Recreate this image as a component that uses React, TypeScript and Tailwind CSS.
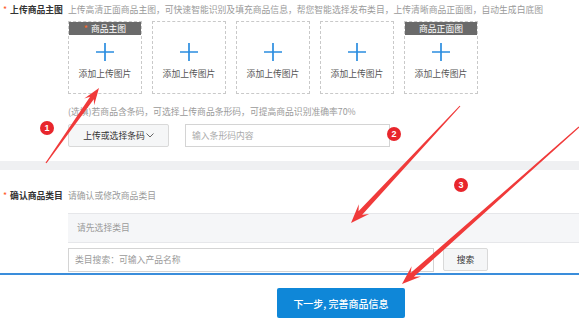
import React from "react";

type P = [number, number];

function arrowPoints(tail: P, tip: P, headLen: number, headW: number, w0: number, w1: number): string {
  const dx = tip[0] - tail[0];
  const dy = tip[1] - tail[1];
  const L = Math.hypot(dx, dy);
  const ux = dx / L, uy = dy / L;
  const nx = -uy, ny = ux;
  const bx = tip[0] - ux * headLen, by = tip[1] - uy * headLen;
  const sx = tip[0] - ux * headLen * 0.72, sy = tip[1] - uy * headLen * 0.72;
  const pts: P[] = [
    [tail[0] + (nx * w0) / 2, tail[1] + (ny * w0) / 2],
    [sx + (nx * w1) / 2, sy + (ny * w1) / 2],
    [bx + (nx * headW) / 2, by + (ny * headW) / 2],
    [tip[0], tip[1]],
    [bx - (nx * headW) / 2, by - (ny * headW) / 2],
    [sx - (nx * w1) / 2, sy - (ny * w1) / 2],
    [tail[0] - (nx * w0) / 2, tail[1] - (ny * w0) / 2],
  ];
  return pts.map((p) => `${p[0].toFixed(1)},${p[1].toFixed(1)}`).join(" ");
}

function Plus() {
  return (
    <svg width="18" height="18" viewBox="0 0 18 18">
      <path d="M9 0V18M0 9H18" stroke="#2b8de0" strokeWidth="1.7" />
    </svg>
  );
}

function UploadBox({ header, star }: { header?: string; star?: boolean }) {
  return (
    <div className="w-[74px] h-[73px] border border-dashed border-[#c9c9c9] flex flex-col items-center">
      {header ? (
        <div className="w-full h-[13px] bg-[#6a6a6a] text-white text-[8.8px] leading-[13px] text-center">
          {star && <span className="text-[#ff6a2a] mr-[3px]">*</span>}
          {header}
        </div>
      ) : null}
      <div className={header ? "mt-[8px]" : "mt-[21px]"}>
        <Plus />
      </div>
      <div className="mt-[7px] text-[8.8px] leading-[12px] text-[#555]">添加上传图片</div>
    </div>
  );
}

function Badge({ n, x, y }: { n: string; x: number; y: number }) {
  return (
    <div
      className="absolute w-[14px] h-[14px] rounded-full bg-[#e8262c] text-white text-[9px] font-bold leading-[14px] text-center font-['Liberation_Sans',sans-serif]"
      style={{ left: x - 7, top: y - 7 }}
    >
      {n}
    </div>
  );
}

export default function App() {
  return (
    <div className="w-[579px] h-[321px] relative overflow-hidden bg-white font-['Noto_Sans_CJK_SC','Noto_Sans',sans-serif]">
      {/* Section 1 */}
      <div className="pt-[4px]">
        <div className="flex h-[12px] items-center text-[8.8px] leading-[12px]">
          <div className="w-[68px] pl-[3px] flex items-center">
            <span className="text-[#ff5a1f]">*</span>
            <span className="ml-[3px] text-[#333] font-bold">上传商品主图</span>
          </div>
          <div className="text-[#9a9a9a] whitespace-nowrap">
            上传高清正面商品主图，可快速智能识别及填充商品信息，帮您智能选择发布类目，上传清晰商品正面图，自动生成白底图
          </div>
        </div>
        <div className="ml-[68px] mt-[5px] flex gap-[10px]">
          <UploadBox header="商品主图" star />
          <UploadBox />
          <UploadBox />
          <UploadBox />
          <UploadBox header="商品正面图" />
        </div>
        <div className="ml-[68px] mt-[12px] text-[8.8px] leading-[12px] text-[#9a9a9a] whitespace-nowrap">
          (选填)若商品含条码，可选择上传商品条形码，可提高商品识别准确率70%
        </div>
        <div className="ml-[68px] mt-[6px] flex gap-[16px]">
          <div className="w-[101px] h-[23px] rounded-[2px] border border-[#d9d9d9] bg-[#f5f6f7] flex items-center justify-center text-[8.8px] text-[#333]">
            上传或选择条码
            <svg width="8" height="5" viewBox="0 0 8 5" className="ml-[1px]">
              <path d="M0.5 0.5L4 4L7.5 0.5" stroke="#555" strokeWidth="0.9" fill="none" />
            </svg>
          </div>
          <div className="w-[205px] h-[23px] border border-[#d4d4d4] bg-white flex items-center pl-[6px] text-[8.8px] text-[#aaa]">
            输入条形码内容
          </div>
        </div>
      </div>

      {/* Separator band */}
      <div className="mt-[14px] h-[9px] bg-[#eff0f2]" />

      {/* Section 2 */}
      <div className="mt-[20px] flex h-[12px] items-center text-[8.8px] leading-[12px]">
        <div className="w-[68px] pl-[3px] flex items-center">
          <span className="text-[#ff5a1f]">*</span>
          <span className="ml-[3px] text-[#333] font-bold">确认商品类目</span>
        </div>
        <div className="text-[#9a9a9a]">请确认或修改商品类目</div>
      </div>
      <div className="ml-[68px] mt-[11px] h-[30px] bg-[#f5f6f8] border-y border-[#e6e7ea] flex items-center pl-[9px] text-[8.8px] text-[#9a9a9a]">
        请先选择类目
      </div>
      <div className="ml-[68px] mt-[5px] flex gap-[9px]">
        <div className="w-[366px] h-[24px] border border-[#d4d4d4] bg-white flex items-center pl-[6px] text-[8.8px] text-[#9a9a9a]">
          类目搜索：可输入产品名称
        </div>
        <div className="w-[45px] h-[23px] rounded-[2px] border border-[#d9d9d9] bg-[#f5f6f7] flex items-center justify-center text-[8.8px] text-[#333]">
          搜索
        </div>
      </div>
      <div className="mt-[1px] h-[2px] bg-[#3a8ddb]" />
      <div className="ml-[277px] mt-[13px] w-[128px] h-[30px] rounded-[2px] bg-[#0f87d8] flex items-center justify-center text-white text-[10px] font-medium">
        下一步, 完善商品信息
      </div>

      {/* Annotations */}
      <svg className="absolute left-0 top-0 pointer-events-none" width="579" height="321">
        <polygon points={arrowPoints([46, 163], [99, 88], 17, 12, 1.2, 4.6)} fill="#f03a3a" />
        <polygon points={arrowPoints([460, 106], [351, 223], 19, 14, 1, 5)} fill="#f03a3a" />
        <polygon points={arrowPoints([579, 127], [402, 284], 19, 14, 1.2, 5)} fill="#f03a3a" />
      </svg>
      <Badge n="1" x={47} y={128} />
      <Badge n="2" x={394} y={134} />
      <Badge n="3" x={461} y={185} />
    </div>
  );
}
